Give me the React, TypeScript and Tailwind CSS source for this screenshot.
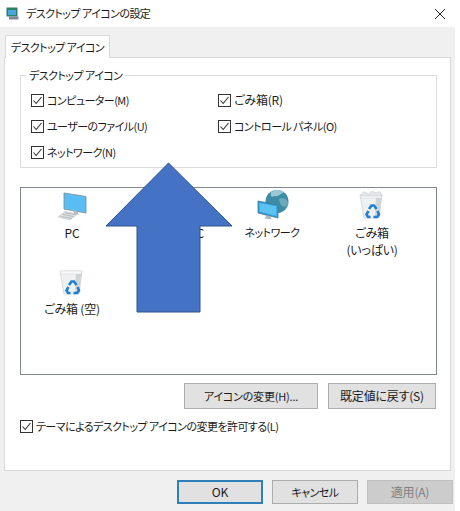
import type { ReactNode } from 'react';

const jp = 'font-["Noto_Sans_CJK_JP","Noto_Sans",sans-serif] [font-feature-settings:"palt"]';
// katakana in the reference's font runs much narrower than kanji
const kana = 'text-[11px] tracking-[-0.55px]';
const kanji = 'text-[12px] tracking-[-0.2px]';

function Check({ label, size = kana }: { label: string; size?: string }) {
  return (
    <label className={`flex items-center gap-[3px] h-[26px] text-[#1a1a1a] whitespace-nowrap ${size}`}>
      <span className="w-[13px] h-[13px] border border-[#333] bg-white flex items-center justify-center shrink-0">
        <svg width="11" height="11" viewBox="0 0 11 11" fill="none">
          <path d="M1.5 5.5 L4.2 8.5 L9.5 2" stroke="#333" strokeWidth="1.1" />
        </svg>
      </span>
      {label}
    </label>
  );
}

function Btn({ children, className }: { children: ReactNode; className: string }) {
  return (
    <button type="button" className={`flex items-center justify-center border ${className}`}>
      {children}
    </button>
  );
}

function PcIcon() {
  return (
    <svg width="44" height="36" viewBox="0 0 44 36">
      <path d="M14 5 L36 8.5 V25 L14 21 Z" fill="#5fc0f4" stroke="#6d8794" strokeWidth="0.8" />
      <path d="M15.5 7 L34.5 10 V23 L15.5 19.5 Z" fill="#58bdf3" />
      <path d="M22 22 L28 23.5 V26 L31 27 L23 26 L24 24.5 Z" fill="#b5bcc1" />
      <path d="M8 29 L15 23.5 L27 26 L20 32 Z" fill="#dcdfe1" stroke="#b7bcc0" strokeWidth="0.5" />
      <path d="M11 28.5 L22 30.5 M13 26.5 L24 28.5 M15 24.8 L26 26.8" stroke="#a9aeb2" strokeWidth="0.7" />
    </svg>
  );
}

function NetIcon() {
  return (
    <svg width="44" height="36" viewBox="0 0 44 36">
      <circle cx="27" cy="13.5" r="11.5" fill="#3d8da5" />
      <path d="M21 4 C25 1 31 1.5 34 4 C30 6 29 9 24 8 C22 10 20 8 21 4 Z" fill="#9cc8d6" />
      <path d="M29 11 C33 9 38 11 38 16 C35 21 30 19 29 11 Z" fill="#6fa9bd" />
      <path d="M8 13 L28 17 V30 L8 25 Z" fill="#2aa0e0" stroke="#4e7486" strokeWidth="0.8" />
      <path d="M9.5 15 L26.5 18.3 V28 L9.5 23.6 Z" fill="#5cc2f3" />
      <path d="M15 27 L21 28.5 V30.5 L24 31.5 L14 30.5 L16 29 Z" fill="#aeb6bb" />
    </svg>
  );
}

function Recycle() {
  return (
    <g fill="none" stroke="#1f80cf" strokeWidth="2.6">
      <path d="M19 21 L21.5 17.5 H24 L26.5 21" />
      <path d="M27.5 23 L29 26.5 L27 29 H23.5" />
      <path d="M20.5 29 H18 L16.5 26.5 L18.5 23" />
    </g>
  );
}

function BinIcon({ full }: { full?: boolean }) {
  return (
    <svg width="44" height="36" viewBox="0 0 44 36">
      <path d="M10 7 L32 7 L29 30 H14 Z" fill="#eef0f1" stroke="#c3c8cb" strokeWidth="0.6" />
      <path d="M26 8 L32 7 L29 30 H25 Z" fill="#cfd4d7" />
      <path d="M10 7 L32 7 L31 10 H11 Z" fill="#f8f8f9" stroke="#d2d6d8" strokeWidth="0.5" />
      {full && <path d="M11 7 L14 3.5 L18 6 L22 3 L26 5 L30 3.5 L32 8 H11 Z" fill="#e4e7e9" stroke="#bfc4c7" strokeWidth="0.5" />}
      <Recycle />
    </svg>
  );
}

function Item({ icon, size = kanji, children }: { icon: ReactNode; size?: string; children: ReactNode }) {
  return (
    <div className={`flex flex-col items-center h-[76px] text-[#1a1a1a] leading-[17px] text-center ${size}`}>
      <div className="h-[36px] flex items-start justify-center">{icon}</div>
      <div className="whitespace-nowrap">{children}</div>
    </div>
  );
}

export default function App() {
  return (
    <div className={`${jp} relative w-[455px] h-[511px] bg-[#f0f0f0] overflow-hidden text-[#1a1a1a]`}>
      {/* title bar */}
      <div className="h-[27px] bg-white flex items-center pl-[6px] pr-[9px]">
        <svg width="13" height="13" viewBox="0 0 13 13" className="mr-[7px]">
          <rect x="0.5" y="0.5" width="11" height="9" fill="#2f7d6b" />
          <rect x="2" y="3" width="8" height="5" fill="#4aa6dc" />
          <rect x="3" y="9.5" width="9.5" height="3" fill="#7f8894" />
        </svg>
        <span className={kana}>デスクトップ アイコンの設定</span>
        <svg width="12" height="12" viewBox="0 0 12 12" className="ml-auto">
          <path d="M1 1 L11 11 M11 1 L1 11" stroke="#222" strokeWidth="1" />
        </svg>
      </div>

      <div className="h-[8px]" />

      <div className="px-[4px]">
        {/* tab */}
        <div className={`ml-[1px] w-[105px] h-[23px] bg-white border border-b-0 border-[#d9d9d9] flex items-center justify-center whitespace-nowrap relative z-10 ${kana}`}>
          デスクトップ アイコン
        </div>

        {/* tab page */}
        <div className="-mt-[1px] h-[414px] bg-white border border-[#d9d9d9] pt-[17px] pl-[15px] pr-[13px]">
          {/* group box */}
          <fieldset className="h-[93px] border border-[#dcdcdc] pl-[10px] relative">
            <legend className={`leading-[14px] px-[3px] -ml-[5px] absolute -top-[8px] bg-white ${kana}`}>デスクトップ アイコン</legend>
            <div className="grid grid-cols-[187px_1fr] pt-[11px]">
              <Check label="コンピューター(M)" />
              <Check label="ごみ箱(R)" size={kanji} />
              <Check label="ユーザーのファイル(U)" />
              <Check label="コントロール パネル(O)" />
              <Check label="ネットワーク(N)" />
            </div>
          </fieldset>

          {/* icon list */}
          <div className="mt-[19px] h-[188px] border border-[#828790] pl-[1px] grid grid-cols-[100px_100px_100px_100px] content-start">
            <Item icon={<PcIcon />}>PC</Item>
            <Item icon={<span />}>
              <span className="pl-[22px]">User PC</span>
            </Item>
            <Item icon={<NetIcon />} size={kana}>ネットワーク</Item>
            <Item icon={<BinIcon full />}>
              ごみ箱
              <br />
              (いっぱい)
            </Item>
            <Item icon={<BinIcon />}>ごみ箱 (空)</Item>
          </div>

          {/* list buttons */}
          <div className="mt-[8px] flex justify-end gap-[10px] pr-[1px]">
            <Btn className="w-[134px] h-[26px] border-[#adadad] bg-[#e1e1e1] text-[11px] tracking-[-0.2px]">アイコンの変更(H)...</Btn>
            <Btn className={`w-[108px] h-[26px] border-[#adadad] bg-[#e1e1e1] ${kanji}`}>既定値に戻す(S)</Btn>
          </div>

          <div className="mt-[4px]">
            <Check label="テーマによるデスクトップ アイコンの変更を許可する(L)" />
          </div>
        </div>
      </div>

      {/* dialog buttons */}
      <div className="mt-[9px] flex justify-end gap-[9px] pr-[2px]">
        <Btn className={`w-[86px] h-[24px] !border-2 border-[#2f7fb8] bg-[#e1e1e1] ${kanji}`}>OK</Btn>
        <Btn className={`w-[86px] h-[24px] border-[#adadad] bg-[#e1e1e1] ${kana}`}>キャンセル</Btn>
        <Btn className={`w-[86px] h-[24px] border-[#bfbfbf] bg-[#cccccc] text-[#808080] ${kanji}`}>適用(A)</Btn>
      </div>

      {/* arrow drawn over the dialog */}
      <svg className="absolute left-[105px] top-[162px]" width="128" height="151" viewBox="0 0 128 151">
        <path d="M63.5 1 L127 64 H95 V150 H32 V64 H1 Z" fill="#4472c4" stroke="#2f528f" strokeWidth="1" />
      </svg>
    </div>
  );
}
